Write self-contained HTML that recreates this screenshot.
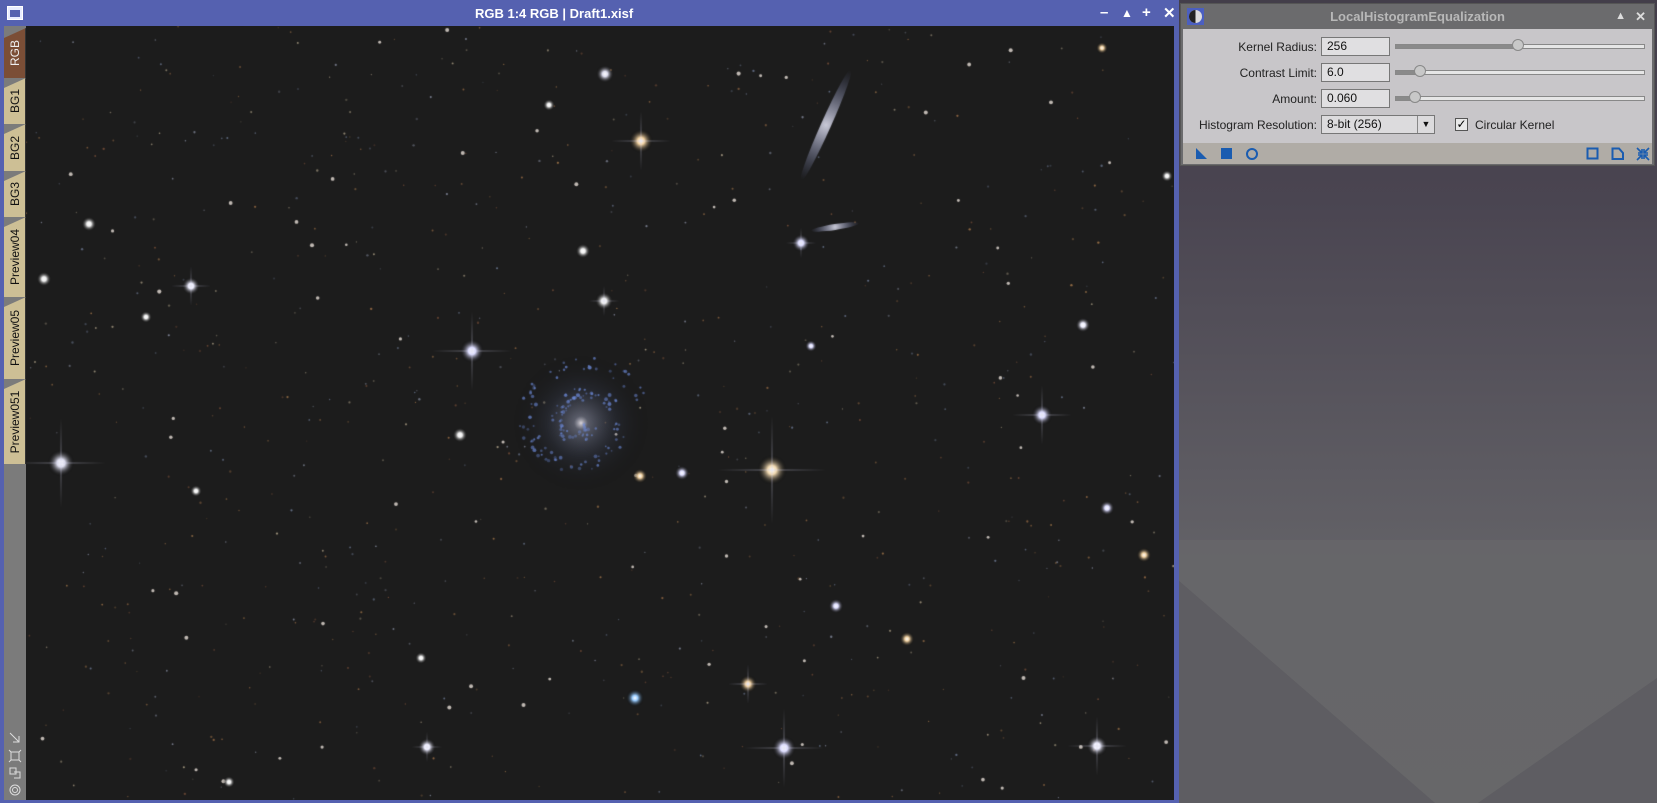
<!DOCTYPE html>
<html><head><meta charset="utf-8"><style>
*{margin:0;padding:0;box-sizing:border-box}
body{width:1657px;height:803px;overflow:hidden;position:relative;font-family:"Liberation Sans",sans-serif;background:#4a4550}
#bg{position:absolute;left:1178px;top:0;width:479px;height:803px}
#win{position:absolute;left:0;top:0;width:1179px;height:803px;background:#5561b0}
#title{position:absolute;left:0;top:0;width:1179px;height:26px;color:#fff;font-weight:bold;font-size:13px}
#title .t{position:absolute;left:475px;top:6px}
#title .b{position:absolute;top:4px;font-size:15px}
#strip{position:absolute;left:4px;top:26px;width:22px;height:774px;background:#7b7b7b}
.tab{position:absolute;left:0;width:22px;clip-path:polygon(0 10px,100% 0,100% 100%,0 100%);background:#cdbf95;border-right:1px solid #333}
.tab span{position:absolute;left:50%;top:50%;transform:translate(-50%,-50%) rotate(-90deg);font-size:12px;color:#111;white-space:nowrap}
#cv{position:absolute;left:26px;top:26px}
#panel{position:absolute;left:1180px;top:3px;width:475px;height:163px;background:#6b6b6d;border:1px solid #555}
#ptitle{height:25px;color:#b8b8b8;font-weight:bold;font-size:13px;text-align:center;line-height:25px;position:relative}
#pbody{position:absolute;left:2px;top:25px;width:469px;height:114px;background:#c8c6c9}
#pfoot{position:absolute;left:2px;top:139px;width:469px;height:21px;background:#b0aca6}
.lbl{position:absolute;font-size:12px;color:#222;text-align:right;width:200px}
.inp{position:absolute;left:138px;width:69px;height:19px;background:#e0dfe1;border:1px solid #777;font-size:12px;padding-left:5px;line-height:17px;color:#111}
.sl{position:absolute;left:212px;width:250px;height:5px;background:#e6e6e6;border:1px solid #888}
.fill{position:absolute;left:0;top:0;height:3px;background:#8a8a8a}
.knob{position:absolute;top:-6px;width:12px;height:12px;border-radius:50%;background:#c8c8c8;border:1px solid #888}
.ic{position:absolute;top:4px}
</style></head><body>
<svg id="bg" viewBox="0 0 479 803">
<defs><linearGradient id="g" x1="0" y1="0" x2="0" y2="1"><stop offset="0" stop-color="#433e4a"/><stop offset="0.25" stop-color="#4a4551"/><stop offset="0.7" stop-color="#636267"/><stop offset="1" stop-color="#646467"/></linearGradient></defs>
<rect width="479" height="803" fill="url(#g)"/>
<polygon points="0,580 0,803 257,803" fill="#5e5d62"/>
<polygon points="479,678 479,803 300,803" fill="#5e5d62"/>
<polygon points="0,580 257,803 300,803 479,678 479,540 0,540" fill="#6a6a6b" opacity="0.5"/>
</svg>
<div id="win">
<div id="title">
<svg style="position:absolute;left:7px;top:6px" width="16" height="14"><rect x="0.5" y="0.5" width="15" height="13" fill="#e8ecff" stroke="#fff"/><rect x="3" y="4" width="10" height="7" fill="#5561b0"/></svg>
<span class="t">RGB 1:4 RGB | Draft1.xisf</span>
<span class="b" style="left:1100px">&#8211;</span>
<span class="b" style="left:1121px;font-size:12px;top:6px">&#9650;</span>
<span class="b" style="left:1142px">+</span>
<span class="b" style="left:1163px">&#10005;</span>
</div>
<div id="strip">
<div class="tab" style="top:2px;height:50px;background:#7b4e36"><span style="color:#eee">RGB</span></div>
<div class="tab" style="top:52px;height:46px"><span>BG1</span></div>
<div class="tab" style="top:98px;height:47px"><span>BG2</span></div>
<div class="tab" style="top:145px;height:46px"><span>BG3</span></div>
<div class="tab" style="top:191px;height:80px"><span>Preview04</span></div>
<div class="tab" style="top:271px;height:82px"><span>Preview05</span></div>
<div class="tab" style="top:353px;height:85px"><span>Preview051</span></div>
<svg style="position:absolute;left:4px;top:704px" width="14" height="70" fill="none" stroke="#ddd" stroke-width="1">
<path d="M2 3 L11 12 M11 6 V12 H5"/>
<path d="M3 22 H11 V30 H3 Z M1 20 L3 22 M13 20 L11 22 M1 32 L3 30 M13 32 L11 30"/>
<path d="M2 38 H8 V44 H2 Z M6 42 H12 V48 H6"/>
<circle cx="7" cy="60" r="5"/><circle cx="7" cy="60" r="2.5"/>
</svg>
</div>
<canvas id="cv" width="1148" height="774"></canvas>
</div>
<div id="panel">
<div id="ptitle">LocalHistogramEqualization
<svg style="position:absolute;left:6px;top:4px" width="17" height="17"><rect width="17" height="17" fill="#4b5fc0"/><circle cx="8.5" cy="8.5" r="6.5" fill="#ddd"/><path d="M8.5 2 A6.5 6.5 0 0 0 8.5 15Z" fill="#222"/></svg>
<span style="position:absolute;right:28px;top:0;font-size:11px;color:#ddd">&#9650;</span>
<span style="position:absolute;right:8px;top:0;color:#ddd">&#10005;</span></div>
<div id="pbody">
<div class="lbl" style="left:-66px;top:11px">Kernel Radius:</div>
<div class="inp" style="top:8px">256</div>
<div class="sl" style="top:15px"><div class="fill" style="width:120px"></div><div class="knob" style="left:116px"></div></div>
<div class="lbl" style="left:-66px;top:37px">Contrast Limit:</div>
<div class="inp" style="top:34px">6.0</div>
<div class="sl" style="top:41px"><div class="fill" style="width:22px"></div><div class="knob" style="left:18px"></div></div>
<div class="lbl" style="left:-66px;top:63px">Amount:</div>
<div class="inp" style="top:60px">0.060</div>
<div class="sl" style="top:67px"><div class="fill" style="width:17px"></div><div class="knob" style="left:13px"></div></div>
<div class="lbl" style="left:-66px;top:89px">Histogram Resolution:</div>
<div class="inp" style="top:86px;width:114px;background:#dcdbdd">8-bit (256)<span style="position:absolute;right:0;top:0;width:17px;height:17px;border-left:1px solid #888;font-size:9px;text-align:center">&#9660;</span></div>
<div style="position:absolute;left:272px;top:89px;width:13px;height:13px;border:1px solid #555;background:#e8e8e8;font-size:12px;line-height:11px;text-align:center">&#10003;</div>
<div style="position:absolute;left:292px;top:89px;font-size:12px;color:#222">Circular Kernel</div>
</div>
<div id="pfoot">
<svg class="ic" style="left:12px" width="14" height="14"><path d="M1 1 L12 12 H1Z" fill="#1a5cb0"/></svg>
<svg class="ic" style="left:37px" width="14" height="14"><rect x="1" y="1" width="11" height="11" fill="#1a5cb0"/></svg>
<svg class="ic" style="left:62px" width="14" height="14"><circle cx="7" cy="7" r="5" fill="none" stroke="#1a5cb0" stroke-width="2"/></svg>
<svg class="ic" style="left:403px" width="14" height="14"><rect x="1.5" y="1.5" width="10" height="10" fill="none" stroke="#1a5cb0" stroke-width="2"/></svg>
<svg class="ic" style="left:428px" width="14" height="14"><path d="M1.5 1.5 H8 L12 6 V12 H1.5Z" fill="none" stroke="#1a5cb0" stroke-width="2"/></svg>
<svg class="ic" style="left:453px" width="14" height="14" stroke="#1a5cb0" stroke-width="1.6" fill="none"><path d="M1 1 L6 6 M6 2 V6 H2 M13 1 L8 6 M8 2 V6 H12 M1 13 L6 8 M2 8 H6 V12 M13 13 L8 8 M12 8 H8 V12"/></svg>
</div>
</div>
<script>
var c=document.getElementById('cv'),x=c.getContext('2d');
x.fillStyle='#1c1c1c';x.fillRect(0,0,1148,774);
var s=12345;function r(){s=(s*16807)%2147483647;return s/2147483647;}
var cols=['#c89058','#b88050','#a0a8c0','#d0c0a0','#905c40','#8090b0'];
for(var i=0;i<800;i++){var px=r()*1148,py=r()*774,big=r()<0.1,sz=big?1.3+r()*0.8:0.6+r()*0.6;x.globalAlpha=big?0.8:0.25+r()*0.45;x.fillStyle=big?'#e8e0d8':cols[Math.floor(r()*cols.length)];x.beginPath();x.arc(px,py,sz,0,7);x.fill();}
x.globalAlpha=1;
function star(X,Y,R,col,sp){X-=26;Y-=26;var g=x.createRadialGradient(X,Y,0,X,Y,R*3);g.addColorStop(0,'#fff');g.addColorStop(0.3,col);g.addColorStop(1,'rgba(0,0,0,0)');x.fillStyle=g;x.beginPath();x.arc(X,Y,R*3,0,7);x.fill();
if(sp){var lg;[[1,0],[-1,0],[0,1],[0,-1]].forEach(function(d){lg=x.createLinearGradient(X,Y,X+d[0]*sp,Y+d[1]*sp);lg.addColorStop(0,'rgba(210,210,235,0.5)');lg.addColorStop(1,'rgba(210,210,235,0)');x.strokeStyle=lg;x.lineWidth=1;x.beginPath();x.moveTo(X,Y);x.lineTo(X+d[0]*sp,Y+d[1]*sp);x.stroke();});}}
var B=[[605,74,3,'#dde',0],[641,141,4,'#f0d0a0',30],[472,351,4,'#ddf',40],[772,470,5,'#f0d8b0',55],[61,463,4.5,'#dde',45],[1042,415,3.5,'#ddf',30],[784,748,4,'#ddf',40],[1097,746,3.5,'#eef',30],[635,698,3,'#9cf',0],[191,286,3,'#eef',20],[801,243,3,'#ddf',15],[1083,325,2.5,'#eef',0],[748,684,3,'#f0d0a0',20],[907,639,2.5,'#f0d0a0',0],[1144,555,2.5,'#f0d0a0',0],[427,747,3,'#eef',15],[44,279,2.5,'#eee',0],[89,224,2.5,'#eee',0],[583,251,2.5,'#eee',0],[604,301,3,'#eee',15],[460,435,2.5,'#eee',0],[682,473,2.5,'#ddf',0],[640,476,2.5,'#f0d0a0',0],[811,346,2,'#ddf',0],[836,606,2.5,'#ddf',0],[1107,508,2.5,'#ddf',0],[242,21,2,'#f0d0a0',0],[146,317,2,'#eee',0],[421,658,2,'#eee',0],[229,782,2,'#eee',0],[196,491,2,'#eee',0],[549,105,2,'#eee',0],[1167,176,2,'#eee',0],[1102,48,2,'#f0d0a0',0]];
B.forEach(function(b){star(b[0],b[1],b[2],b[3],b[4]);});
var gx=581-26,gy=423-26;var gg=x.createRadialGradient(gx,gy,0,gx,gy,70);gg.addColorStop(0,'rgba(230,225,230,0.95)');gg.addColorStop(0.1,'rgba(150,155,180,0.5)');gg.addColorStop(0.5,'rgba(70,80,110,0.2)');gg.addColorStop(1,'rgba(0,0,0,0)');x.fillStyle=gg;x.beginPath();x.ellipse(gx,gy,75,70,0,0,7);x.fill();
for(var i=0;i<160;i++){var a=r()*12,rr=8+a*5+(r()-0.5)*14;var ang=a+r()*0.6;x.fillStyle='rgba(110,140,220,'+(0.3+r()*0.4)+')';x.beginPath();x.arc(gx+Math.cos(ang)*rr,gy+Math.sin(ang)*rr*0.95,0.8+r()*1.2,0,7);x.fill();}
x.save();x.translate(826-26,125-26);x.rotate(-1.15);var e=x.createRadialGradient(0,0,0,0,0,60);e.addColorStop(0,'rgba(220,220,235,0.9)');e.addColorStop(1,'rgba(100,110,160,0)');x.fillStyle=e;x.beginPath();x.ellipse(0,0,62,5,0,0,7);x.fill();x.restore();
x.save();x.translate(835-26,227-26);x.rotate(-0.15);e=x.createRadialGradient(0,0,0,0,0,25);e.addColorStop(0,'rgba(220,220,235,0.9)');e.addColorStop(1,'rgba(100,110,160,0)');x.fillStyle=e;x.beginPath();x.ellipse(0,0,24,3,0,0,7);x.fill();x.restore();
</script>
</body></html>
